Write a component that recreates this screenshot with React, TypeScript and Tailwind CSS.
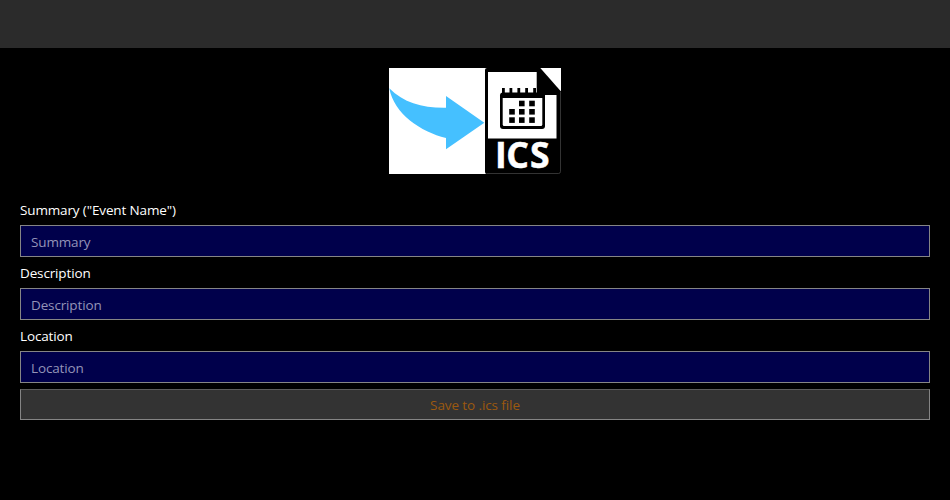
const fields = [
  { label: 'Summary ("Event Name")', placeholder: "Summary" },
  { label: "Description", placeholder: "Description" },
  { label: "Location", placeholder: "Location" },
];

function Logo() {
  return (
    <svg width="172" height="106" viewBox="0 0 172 106" className="block overflow-visible">
      <rect width="172" height="106" fill="#fff" />
      <path d="M0.3 20.3C15 35 33 40 57 39.7V28L95.3 54.7L57 81.3V70C32 64 5 46 0.3 20.3Z" fill="#45c0ff" />
      <path d="M98 0H151.3L172 23.5V106H98Q96 106 96 104V2Q96 0 98 0Z" fill="#000" />
      <path d="M171.5 24V103.5Q171.5 105.5 169.5 105.5H98" fill="none" stroke="#555" strokeWidth="0.6" />
      <path d="M99 4H147.7V27H167.5V70.5H99Z" fill="#fff" />
      <rect x="111" y="24.5" width="45" height="36.5" rx="3" fill="#000" />
      <path d="M113.7 30H153.3V56.5Q153.3 58 151.8 58H115.2Q113.7 58 113.7 56.5Z" fill="#fff" />
      {[113, 120.5, 128.4, 136.2, 144.2].map((x) => (
        <rect key={x} x={x} y="20" width="2.8" height="6" fill="#000" />
      ))}
      {[32.7, 41, 49.3].map((y, row) =>
        [120.2, 130, 140.2].map((x, col) =>
          row === 0 && col === 0 ? null : (
            <rect key={`${x}-${y}`} x={x} y={y} width="5.6" height="5.6" fill="#000" />
          ),
        ),
      )}
      <text x="106 117.3 141" y="99.9" fontFamily="'Open Sans', sans-serif" fontWeight="700" fontSize="35.5" fill="#fff" stroke="#fff" strokeWidth="0.5">
        ICS
      </text>
    </svg>
  );
}

export default function App() {
  return (
    <div className="flex h-[500px] w-full flex-col bg-black font-['Open_Sans','Noto_Sans',sans-serif] text-[13.5px] tracking-[-0.14px] text-white">
      <header className="h-12 shrink-0 bg-[#2b2b2b]" />
      <main className="flex flex-col px-5 pt-5">
        <div className="mb-[26px] flex justify-center">
          <Logo />
        </div>
        {fields.map((f) => (
          <div key={f.label} className="mb-1.5 flex flex-col">
            <label className="h-[25px] leading-[20px]">{f.label}</label>
            <input
              placeholder={f.placeholder}
              className="h-8 w-full border border-[#858585] bg-[#00004b] px-2.5 pt-0.5 outline-none placeholder:text-[#9494b8]"
            />
          </div>
        ))}
        <button className="h-[31px] border border-[#858585] border-t-[#5c5c5c] bg-[#333] pt-0.5 leading-[27px] tracking-[-0.1px] text-[#9c590f]">
          Save to .ics file
        </button>
      </main>
    </div>
  );
}
